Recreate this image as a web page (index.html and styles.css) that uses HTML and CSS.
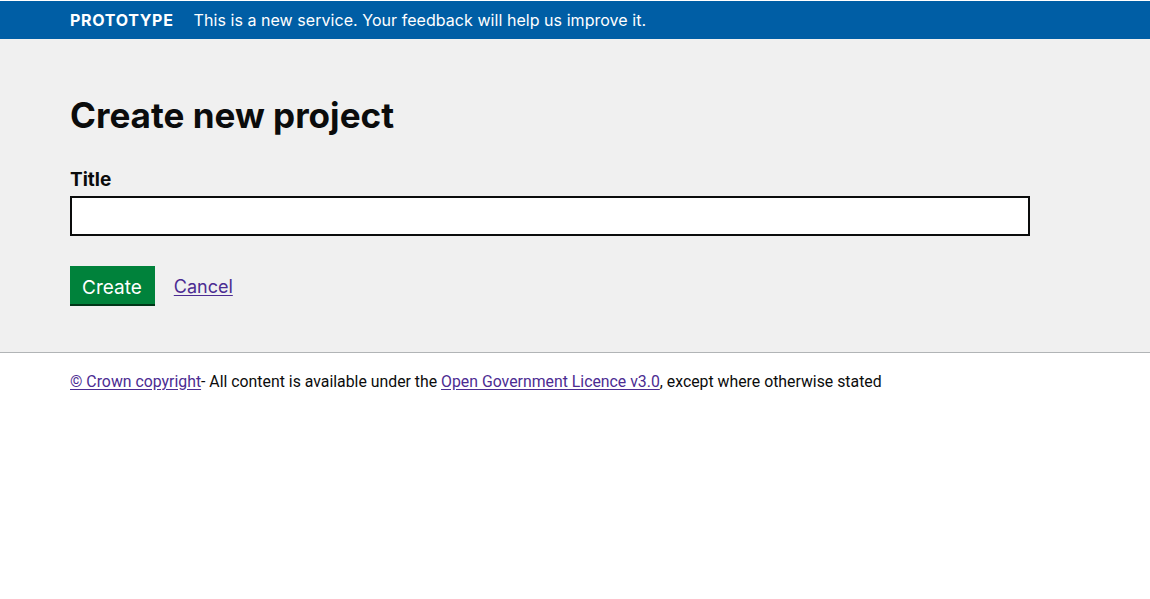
FILE: index.html
```html
<!DOCTYPE html>
<html lang="en">
<head>
<meta charset="utf-8">
<title>Create new project</title>
<link rel="stylesheet" href="styles.css">
</head>
<body>
<div class="banner">
  <div class="container banner-inner">
    <strong class="tag">PROTOTYPE</strong>
    <span class="banner-text">This is a new service. Your feedback will help us improve it.</span>
  </div>
</div>
<main class="main">
  <div class="container">
    <h1 class="heading">Create new project</h1>
    <form class="form">
      <label class="label" for="title">Title</label>
      <input class="input" id="title" type="text">
      <div class="actions">
        <button class="button" type="button">Create</button>
        <a class="link cancel" href="#">Cancel</a>
      </div>
    </form>
  </div>
</main>
<footer class="footer">
  <div class="container footer-text">
    <a class="link" href="#">© Crown copyright</a>- All content is available under the <a class="link" href="#">Open Government Licence v3.0</a>, except where otherwise stated
  </div>
</footer>
</body>
</html>
```
FILE: styles.css
```css
* { box-sizing: border-box; }
html, body { margin: 0; padding: 0; background: #fff; }
body { font-family: Inter, "Liberation Sans", sans-serif; color: #0b0c0c; }
.container { padding: 0 70px; }
.banner { margin-top: 1px; background: #005ea5; color: #fff; height: 38px; }
.banner-inner { display: flex; align-items: center; height: 38px; gap: 20px; }
.tag { font-size: 16px; font-weight: 700; letter-spacing: 0.7px; }
.banner-text { font-size: 16px; letter-spacing: 0.05px; }
.main { background: #f0f0f0; border-bottom: 1px solid #b1b4b6; padding: 54px 0 46px; }
.heading { margin: 0 0 30px; font-size: 35.1px; font-weight: 700; line-height: 44px; }
.form { display: flex; flex-direction: column; align-items: flex-start; }
.label { font-size: 19px; font-weight: 700; line-height: 25px; margin-bottom: 4px; }
.input { width: 960px; height: 40px; border: 2px solid #0b0c0c; background: #fff; margin: 0 0 30px; font: inherit; font-size: 19px; padding: 5px; border-radius: 0; }
.actions { display: flex; align-items: center; gap: 19px; }
.button { background: #00823b; color: #fff; border: 0; border-radius: 0; box-shadow: 0 2px 0 #003618; height: 38px; margin-bottom: 2px; padding: 3px 13px 0 12px; font-family: Inter, "Liberation Sans", sans-serif; font-size: 19px; line-height: 38px; }
.link { color: #4c2c92; text-decoration: underline; text-underline-offset: 2px; }
.cancel { font-size: 18px; }
.footer { padding-top: 19px; }
.footer-text { font-family: Roboto, "Liberation Sans", sans-serif; font-size: 15.83px; line-height: 20px; }
```
